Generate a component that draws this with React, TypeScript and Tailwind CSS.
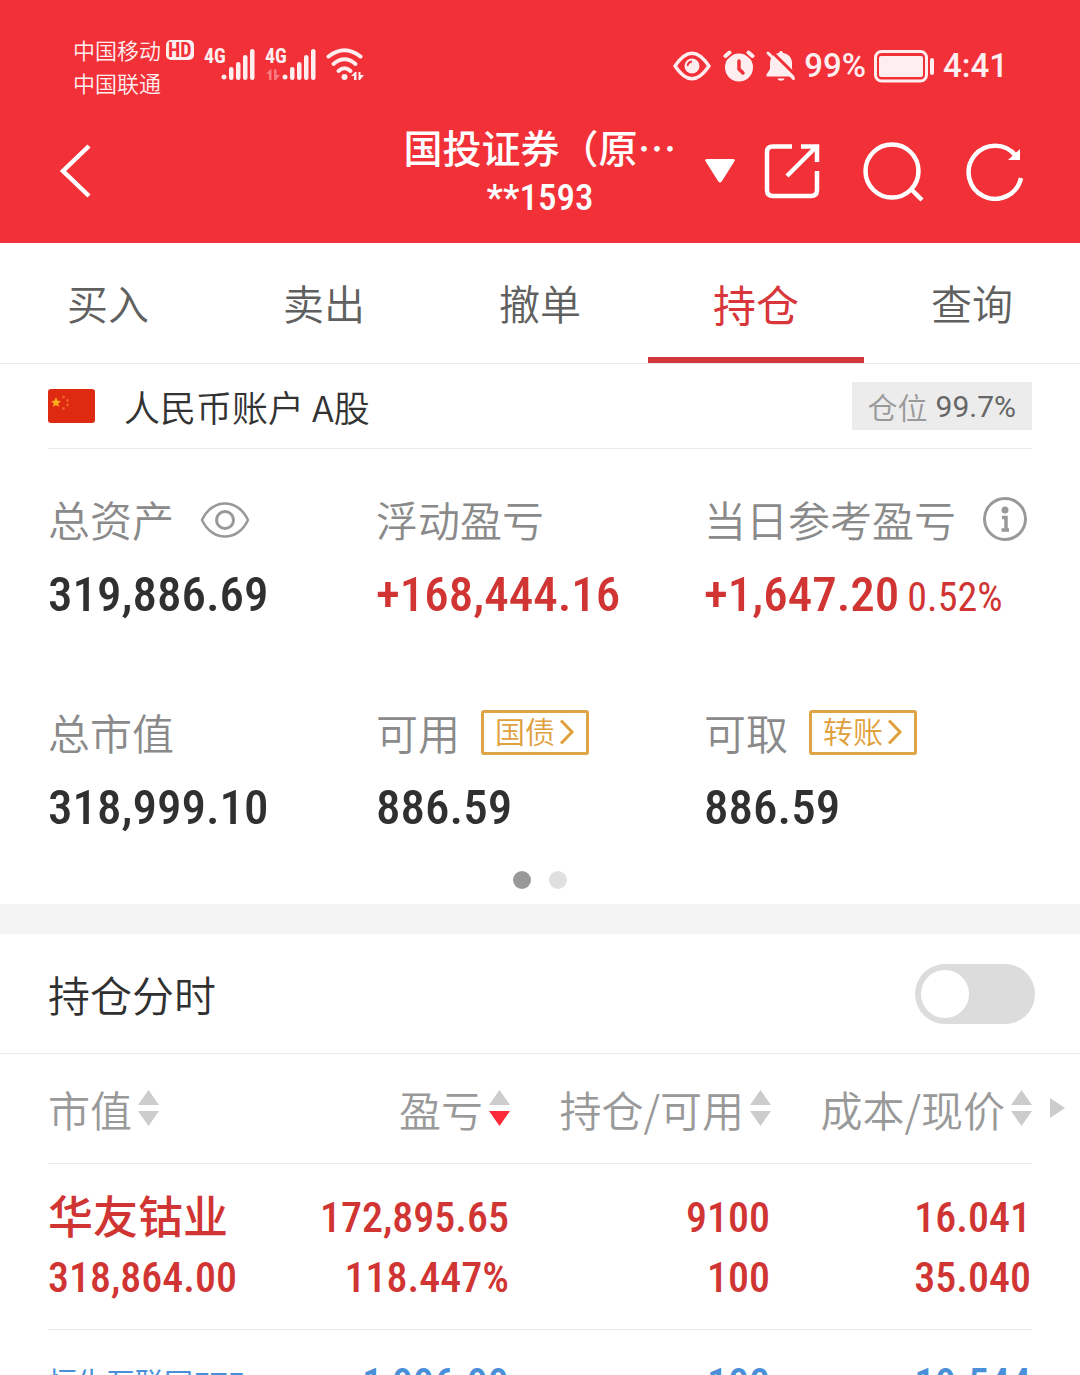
import { useState } from "react";
import clsx from "clsx";

const TABS = ["买入", "卖出", "撤单", "持仓", "查询"];

type SortDir = "asc" | "desc" | null;

const COLUMNS = ["市值", "盈亏", "持仓/可用", "成本/现价"];

// condensed digits, CJK falls through to Noto
const NUM_FONT = "font-['Roboto_Condensed','Noto_Sans_CJK_SC',sans-serif]";

interface Holding {
  name: string;
  small?: boolean;
  tone: "up" | "down";
  top: string[];
  bottom: string[];
}

const HOLDINGS: Holding[] = [
  {
    name: "华友钴业",
    tone: "up",
    top: ["172,895.65", "9100", "16.041"],
    bottom: ["318,864.00", "118.447%", "100", "35.040"],
  },
  {
    name: "恒生互联网ETF",
    small: true,
    tone: "down",
    top: ["1,996.99", "100", "19.544"],
    bottom: [],
  },
];

// ---------- status bar ----------

function Signal({ data }: { data?: boolean }) {
  return (
    <svg width="52" height="40" viewBox="0 -6 52 40" fill="currentColor">
      <text
        x="0"
        y="16"
        fontSize="20"
        fontWeight="700"
        fontFamily="'Roboto Condensed', 'Liberation Sans Narrow', sans-serif"
      >
        4G
      </text>
      <circle cx="20" cy="30" r="2.5" />
      <rect x="25" y="20" width="4.5" height="13" rx="2.2" />
      <rect x="32" y="15" width="4.5" height="18" rx="2.2" />
      <rect x="39" y="8" width="4.5" height="25" rx="2.2" />
      <rect x="46" y="2" width="4.5" height="31" rx="2.2" />
      {data && (
        <g opacity="0.4">
          <path d="M1 27 L5 22.5 H6.5 V33 H4 V27 Z" />
          <path d="M9 22.5 H11.5 V28 H15 L11 33 H9 Z" />
        </g>
      )}
    </svg>
  );
}

function Wifi() {
  return (
    <svg width="38" height="34" viewBox="0 0 38 34" fill="none" stroke="currentColor">
      <g strokeWidth="4" strokeLinecap="round">
        <path d="M2.5 9.5 Q18.5 -3 34.5 9.5" />
        <path d="M7.5 17 Q18.5 7.5 29.5 17" />
        <path d="M12.5 24 Q18.5 18.5 24.5 24" />
      </g>
      <g fill="currentColor" stroke="none">
        <circle cx="18.5" cy="30" r="3" />
        <path d="M25 29 L29 25 H30.5 V33 H28 V29 Z" />
        <path d="M32.5 25 H34.5 V28 H38 L34 33 H32.5 Z" />
      </g>
    </svg>
  );
}

function StatusEye() {
  return (
    <svg width="38" height="30" viewBox="0 0 38 30" fill="none" stroke="currentColor">
      <path
        d="M2 15 C8 6 13 2.2 19 2.2 C25 2.2 30 6 36 15 C30 24 25 27.8 19 27.8 C13 27.8 8 24 2 15 Z"
        strokeWidth="3.4"
        strokeLinejoin="round"
      />
      <circle cx="19" cy="15" r="7.5" fill="currentColor" stroke="none" />
      <path d="M14.5 15 Q15 11 19 10.5" stroke="#f13037" strokeWidth="1.8" />
    </svg>
  );
}

function StatusAlarm() {
  return (
    <svg width="32" height="32" viewBox="0 0 32 32" fill="none">
      <circle cx="16" cy="17.5" r="14" fill="currentColor" />
      <path d="M2 6 L7 2 M30 6 L25 2" stroke="#f13037" strokeWidth="8" />
      <path d="M2.5 6 L6.5 2.5 M29.5 6 L25.5 2.5" stroke="currentColor" strokeWidth="4" strokeLinecap="round" />
      <path d="M16 11 V19 L20 23" stroke="#f13037" strokeWidth="3.5" strokeLinecap="round" />
    </svg>
  );
}

function StatusBell() {
  return (
    <svg width="32" height="32" viewBox="0 0 32 32">
      <g fill="currentColor">
        <path d="M16 1 C17.5 1 18 2 18 3 C24 4 27 8 27 13 V19 L30 25 V26.5 H1.5 V24.5 L5 19 V13 C5 8 8 4 14 3 C14 2 14.5 1 16 1 Z" />
        <path d="M12.5 28.5 H19.5 C19 31.5 13 31.5 12.5 28.5 Z" />
      </g>
      <path d="M5 0 L34 28.5" stroke="#f13037" strokeWidth="3" />
      <path d="M3 3 L28.5 28.5" stroke="currentColor" strokeWidth="3" strokeLinecap="round" />
    </svg>
  );
}

function Battery() {
  return (
    <svg width="60" height="33" viewBox="0 0 60 33">
      <rect x="1.5" y="1.5" width="51" height="29.5" rx="6" fill="none" stroke="currentColor" strokeWidth="3" />
      <rect x="5" y="6" width="44" height="21" rx="2" fill="currentColor" />
      <rect x="56" y="8" width="4" height="17" rx="2" fill="currentColor" />
    </svg>
  );
}

function StatusBar() {
  return (
    <div className="flex h-[102px] items-center justify-between pt-[30px] pr-[72px] pl-[73px] text-[#ffeef0]">
      <div className="flex items-start">
        <div className="text-[22px] leading-[33px] font-[350]">
          <div className="flex items-center gap-[5px]">
            中国移动
            <span className="rounded-[5px] bg-[#ffeef0] px-[2px] font-['Roboto_Condensed'] text-[20px] leading-[20px] font-bold text-[#f13037]">
              HD
            </span>
          </div>
          <div>中国联通</div>
        </div>
        <div className="mt-2 ml-[10px] flex items-end gap-[9px]">
          <Signal />
          <Signal data />
          <Wifi />
        </div>
      </div>
      <div className="flex items-center font-[Roboto] text-[33px] leading-[40px] font-medium">
        <StatusEye />
        <span className="ml-3">
          <StatusAlarm />
        </span>
        <span className="ml-[10px]">
          <StatusBell />
        </span>
        <span className="ml-[7px]">99%</span>
        <span className="ml-2">
          <Battery />
        </span>
        <span className="ml-[9px]">4:41</span>
      </div>
    </div>
  );
}

// ---------- header ----------

function Header() {
  return (
    <header className="shrink-0 bg-[#f13037] text-white">
      <StatusBar />
      <div className="grid h-[141px] grid-cols-[1fr_auto_1fr] pb-1">
        <div className="flex items-center pl-[58px]">
          <button type="button" aria-label="返回">
            <svg width="34" height="56" viewBox="0 0 34 56" fill="none" stroke="currentColor" strokeWidth="4.5">
              <path d="M31 3 L5 28 L31 53" />
            </svg>
          </button>
        </div>
        <div className="pt-[18px] text-center font-medium">
          <h1 className="text-[39px] leading-[52px] font-medium">国投证券（原…</h1>
          <p className={clsx("text-[37px] leading-[52px]", NUM_FONT)}>**1593</p>
        </div>
        <div className="flex items-center justify-end pr-[55px]">
          <button type="button" aria-label="切换账户">
            <svg width="32" height="26" viewBox="0 0 32 26" fill="currentColor">
              <path d="M3 1 H29 Q32 1 30 4 L18 23 Q16 26 14 23 L2 4 Q0 1 3 1 Z" />
            </svg>
          </button>
          <button type="button" aria-label="分享" className="ml-7">
            <svg width="56" height="56" viewBox="0 0 56 56" fill="none" stroke="currentColor" strokeWidth="4.5">
              <path d="M28 3.5 H9 Q3 3.5 3 9 V47 Q3 53 9 53 H47 Q53 53 53 47 V28" />
              <path d="M37 3.5 H53 V19" />
              <path d="M23 33 L52 4" />
            </svg>
          </button>
          <button type="button" aria-label="搜索" className="ml-[42px]">
            <svg width="62" height="62" viewBox="0 0 62 62" fill="none" stroke="currentColor" strokeWidth="4.5">
              <circle cx="30" cy="31" r="26.5" />
              <path d="M49 49 L60 60" />
            </svg>
          </button>
          <button type="button" aria-label="刷新" className="ml-[41px]">
            <svg width="60" height="60" viewBox="0 0 60 60" fill="none" stroke="currentColor" strokeWidth="4.5">
              <path d="M51 15 A26.5 26.5 0 1 0 56 37" />
              <path d="M55 8 V19 H43 Z" fill="currentColor" stroke="none" />
            </svg>
          </button>
        </div>
      </div>
    </header>
  );
}

function Tabs() {
  const [active, setActive] = useState("持仓");

  return (
    <nav className="grid h-[121px] shrink-0 grid-cols-5 border-b border-[#ebebeb]">
      {TABS.map((tab) => (
        <button
          key={tab}
          type="button"
          onClick={() => setActive(tab)}
          className={clsx(
            "border-b-6 pt-[6px]",
            active === tab
              ? "border-[#d3373a] text-[43px] text-[#d8363a]"
              : "border-transparent text-[41px] font-[350] text-[#606060]",
          )}
        >
          {tab}
        </button>
      ))}
    </nav>
  );
}

// ---------- account ----------

function Flag() {
  return (
    <svg width="47" height="34" viewBox="0 0 47 34">
      <rect width="47" height="34" rx="3" fill="#de2a10" />
      <path
        d="M8 8 L9.5 11.8 L13 12 L10.2 14.4 L11.2 18 L8 16 L4.8 18 L5.8 14.4 L3 12 L6.5 11.8 Z"
        fill="#fbb01c"
      />
      <g fill="#f0602a">
        <circle cx="15.5" cy="8" r="1.4" />
        <circle cx="19.5" cy="11.5" r="1.4" />
        <circle cx="19.5" cy="16" r="1.4" />
        <circle cx="15.5" cy="19.5" r="1.4" />
      </g>
    </svg>
  );
}

function LinkTag({ label }: { label: string }) {
  return (
    <button
      type="button"
      className="flex h-[45px] w-[108px] items-center justify-center gap-1 rounded-[3px] border-3 border-[#dda544] text-[30px] leading-none font-[350] text-[#e0a03c]"
    >
      <span className="pb-1">{label}</span>
      <svg width="16" height="26" viewBox="0 0 16 26" fill="none" stroke="currentColor" strokeWidth="3">
        <path d="M2 1.5 L13 13 L2 24.5" />
      </svg>
    </button>
  );
}

function Stat({
  label,
  value,
  extra,
  sub,
  red,
}: {
  label: string;
  value: string;
  extra?: React.ReactNode;
  sub?: string;
  red?: boolean;
}) {
  return (
    <div className="whitespace-nowrap">
      <div className="flex h-[60px] items-center text-[42px] font-[350] text-[#8a8a8a]">
        <span className="pb-[2px]">{label}</span>
        {extra}
      </div>
      <div
        className={clsx(
          "mt-4 text-[49px] leading-[60px] font-medium",
          NUM_FONT,
          red ? "text-[#d03533]" : "text-[#303030]",
        )}
      >
        {value}
        {sub && <span className="ml-2 text-[40px] font-normal">{sub}</span>}
      </div>
    </div>
  );
}

function Account() {
  const [hidden, setHidden] = useState(false);
  const mask = (v: string) => (hidden ? "****" : v);

  return (
    <section className="shrink-0 px-12">
      <div className="flex h-[85px] items-center border-b border-[#ebebeb]">
        <Flag />
        <h2 className="ml-[29px] text-[36px] font-[350] text-[#333]">人民币账户 A股</h2>
        <div className="ml-auto flex h-12 items-center gap-2 bg-[#ececec] px-4 text-[30px] font-[350] text-[#999]">
          仓位 <span className="font-[Roboto] font-normal text-[#666]">99.7%</span>
        </div>
      </div>

      <div className="grid grid-cols-3 gap-y-[74px] pt-10">
        <Stat
          label="总资产"
          value={mask("319,886.69")}
          extra={
            <button type="button" aria-label="隐藏金额" onClick={() => setHidden(!hidden)} className="ml-[26px]">
              <svg width="50" height="38" viewBox="0 -2 50 38" fill="none" stroke="#999" strokeWidth="2.5">
                <path d="M2 18 C7 7 16 1.5 25 1.5 C34 1.5 43 7 48 18 C43 29 34 34.5 25 34.5 C16 34.5 7 29 2 18 Z" />
                <circle cx="25" cy="18" r="8.5" strokeWidth="3" />
              </svg>
            </button>
          }
        />
        <Stat label="浮动盈亏" value={mask("+168,444.16")} red />
        <Stat
          label="当日参考盈亏"
          value={mask("+1,647.20")}
          sub="0.52%"
          red
          extra={
            <button type="button" aria-label="说明" className="ml-[26px]">
              <svg width="46" height="46" viewBox="0 0 46 46" fill="none" stroke="#999">
                <circle cx="23" cy="23" r="20.5" strokeWidth="3" />
                <circle cx="23" cy="14" r="3.5" fill="#999" stroke="none" />
                <path d="M20 21.5 H24 V34 M19.5 34 H27" strokeWidth="3.5" />
              </svg>
            </button>
          }
        />
        <Stat label="总市值" value={mask("318,999.10")} />
        <Stat
          label="可用"
          value={mask("886.59")}
          extra={
            <span className="ml-[21px]">
              <LinkTag label="国债" />
            </span>
          }
        />
        <Stat
          label="可取"
          value={mask("886.59")}
          extra={
            <span className="ml-[21px]">
              <LinkTag label="转账" />
            </span>
          }
        />
      </div>

      <div className="flex justify-center gap-[18px] pt-[33px] pb-[15px]">
        <span className="size-[18px] rounded-full bg-[#999]" />
        <span className="size-[18px] rounded-full bg-[#e0e0e0]" />
      </div>
    </section>
  );
}

// ---------- holdings ----------

function SortIcon({ dir }: { dir: SortDir }) {
  return (
    <svg width="21" height="36" viewBox="0 0 21 36" className="shrink-0">
      <path d="M10.5 0 L21 15 H0 Z" fill={dir === "asc" ? "#fb2b3a" : "#ccc"} />
      <path d="M10.5 36 L21 21 H0 Z" fill={dir === "desc" ? "#fb2b3a" : "#ccc"} />
    </svg>
  );
}

function Holdings() {
  const [sortBy, setSortBy] = useState("盈亏");

  return (
    <section className="relative px-12">
      <table className="w-full table-fixed border-collapse">
        <thead>
          <tr className="h-[109px] border-b border-[#ebebeb]">
            {COLUMNS.map((col, i) => (
              <th key={col} scope="col" className={clsx("p-0 font-[350]", i === 0 && "w-[201px]")}>
                <button
                  type="button"
                  onClick={() => setSortBy(col)}
                  className={clsx(
                    "flex w-full items-center gap-[6px] text-[42px] whitespace-nowrap text-[#999]",
                    i > 0 && "justify-end",
                  )}
                >
                  {col}
                  <SortIcon dir={sortBy === col ? "desc" : null} />
                </button>
              </th>
            ))}
          </tr>
        </thead>
        <tbody>
          {HOLDINGS.map((h) => (
            <tr
              key={h.name}
              className={clsx(
                "h-[166px] border-b border-[#ebebeb] text-right align-top text-[42px] leading-[60px] font-medium",
                NUM_FONT,
                h.tone === "up" ? "text-[#d03533]" : "text-[#4a90d9]",
              )}
            >
              <td className="p-0 pt-6 text-left whitespace-nowrap">
                <div
                  className={clsx(
                    "h-[60px] font-['Noto_Sans_CJK_SC',sans-serif] leading-[54px]",
                    h.small ? "text-[29px] font-normal" : "text-[45px]",
                  )}
                >
                  {h.name}
                </div>
                <div>{h.bottom[0]}</div>
              </td>
              {h.top.map((v, i) => (
                <td key={i} className="p-0 pt-6 pr-px">
                  <div>{v}</div>
                  <div>{h.bottom[i + 1]}</div>
                </td>
              ))}
            </tr>
          ))}
        </tbody>
      </table>
      {/* hint that more columns are off to the right */}
      <svg width="15" height="20" viewBox="0 0 15 20" className="absolute top-11 right-[15px]" fill="#ccc">
        <path d="M0 0 L15 10 L0 20 Z" />
      </svg>
    </section>
  );
}

function App() {
  const [intraday, setIntraday] = useState(false);

  return (
    <div
      lang="zh-CN"
      className="flex h-screen flex-col overflow-hidden bg-white font-['Noto_Sans_CJK_SC',sans-serif]"
    >
      <Header />
      <Tabs />
      <Account />
      <div className="h-[30px] shrink-0 bg-[#f4f4f4]" />
      <label className="flex h-[120px] shrink-0 items-center justify-between border-b border-[#ebebeb] pr-[45px] pl-12 text-[42px] font-[350] text-[#303030]">
        持仓分时
        <input
          type="checkbox"
          role="switch"
          checked={intraday}
          onChange={(e) => setIntraday(e.target.checked)}
          className="h-[60px] w-[120px] appearance-none rounded-full bg-[#dcdcdc] p-[6px] before:block before:size-12 before:rounded-full before:bg-white checked:bg-[#f13037] checked:before:ml-auto"
        />
      </label>
      <Holdings />
    </div>
  );
}

export default App;
